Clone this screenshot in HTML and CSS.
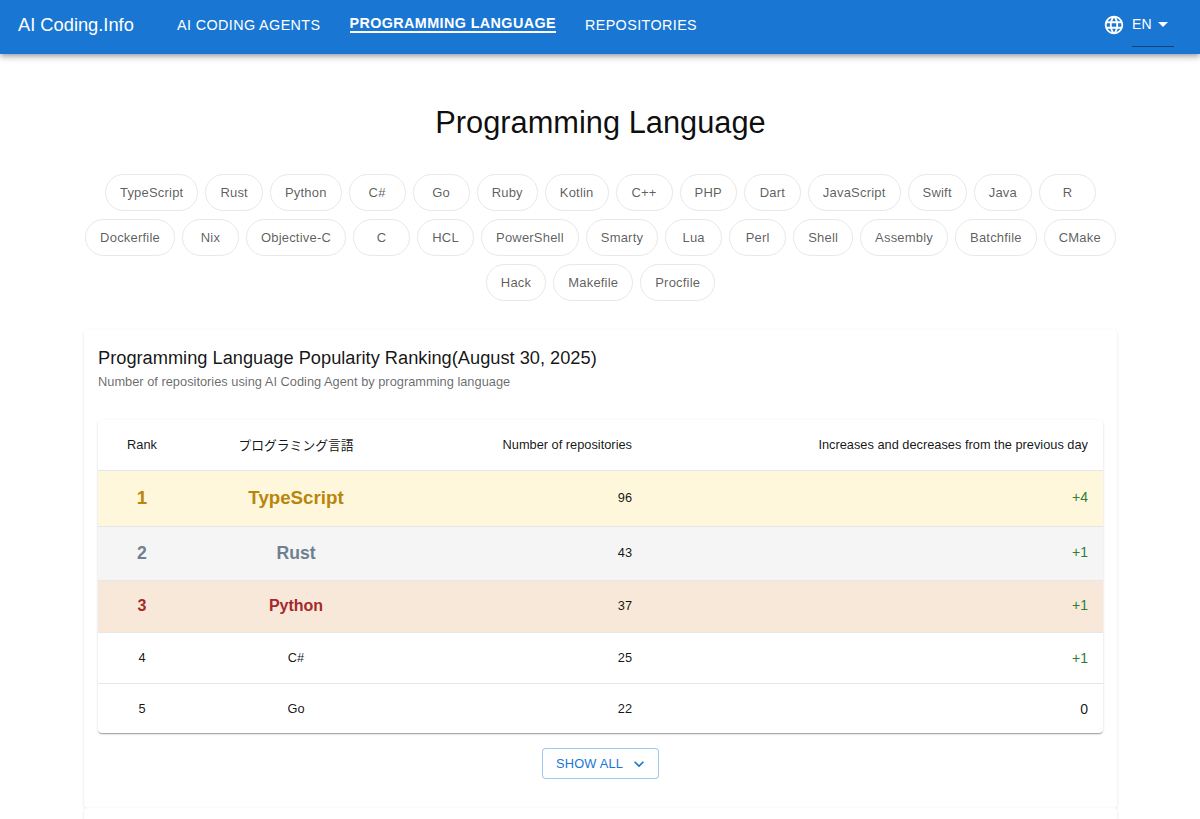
FILE: index.html
```html
<!DOCTYPE html>
<html lang="en">
<head>
<meta charset="utf-8">
<title>Programming Language</title>
<link rel="stylesheet" href="styles.css">
</head>
<body>
<header class="appbar">
  <a class="brand" href="#">AI Coding.Info</a>
  <nav class="nav">
    <a href="#">AI Coding Agents</a>
    <a href="#" class="active">Programming Language</a>
    <a href="#">Repositories</a>
  </nav>
  <div class="lang">
    <svg class="globe" viewBox="0 0 24 24" width="22" height="22"><path fill="#fff" d="M11.99 2C6.47 2 2 6.48 2 12s4.47 10 9.99 10C17.52 22 22 17.52 22 12S17.52 2 11.99 2zm6.93 6h-2.95c-.32-1.25-.78-2.45-1.38-3.56 1.84.63 3.37 1.91 4.33 3.56zM12 4.04c.83 1.2 1.48 2.53 1.91 3.96h-3.82c.43-1.43 1.08-2.76 1.91-3.96zM4.26 14C4.1 13.36 4 12.69 4 12s.1-1.36.26-2h3.38c-.08.66-.14 1.32-.14 2s.06 1.34.14 2H4.26zm.82 2h2.95c.32 1.25.78 2.45 1.38 3.56-1.84-.63-3.37-1.9-4.33-3.56zm2.95-8H5.08c.96-1.66 2.49-2.93 4.33-3.56C8.81 5.55 8.35 6.75 8.03 8zM12 19.96c-.83-1.2-1.48-2.53-1.91-3.96h3.82c-.43 1.43-1.08 2.76-1.91 3.96zM14.34 14H9.66c-.09-.66-.16-1.32-.16-2s.07-1.35.16-2h4.68c.09.65.16 1.32.16 2s-.07 1.34-.16 2zm.25 5.56c.6-1.11 1.06-2.31 1.38-3.56h2.95c-.96 1.65-2.49 2.93-4.33 3.56zM16.36 14c.08-.66.14-1.32.14-2s-.06-1.34-.14-2h3.38c.16.64.26 1.31.26 2s-.1 1.36-.26 2h-3.38z"/></svg>
    <div class="select">
      <span>EN</span>
      <svg class="caret" viewBox="0 0 10 5" width="10" height="5"><path fill="#fff" d="M0 0l5 5 5-5z"/></svg>
    </div>
  </div>
</header>

<main class="page">
  <h1 class="title">Programming Language</h1>
  <div class="chips">
    <a class="chip" href="#">TypeScript</a><a class="chip" href="#">Rust</a><a class="chip" href="#">Python</a><a class="chip" href="#">C#</a><a class="chip" href="#">Go</a><a class="chip" href="#">Ruby</a><a class="chip" href="#">Kotlin</a><a class="chip" href="#">C++</a><a class="chip" href="#">PHP</a><a class="chip" href="#">Dart</a><a class="chip" href="#">JavaScript</a><a class="chip" href="#">Swift</a><a class="chip" href="#">Java</a><a class="chip" href="#">R</a><a class="chip" href="#">Dockerfile</a><a class="chip" href="#">Nix</a><a class="chip" href="#">Objective-C</a><a class="chip" href="#">C</a><a class="chip" href="#">HCL</a><a class="chip" href="#">PowerShell</a><a class="chip" href="#">Smarty</a><a class="chip" href="#">Lua</a><a class="chip" href="#">Perl</a><a class="chip" href="#">Shell</a><a class="chip" href="#">Assembly</a><a class="chip" href="#">Batchfile</a><a class="chip" href="#">CMake</a><a class="chip" href="#">Hack</a><a class="chip" href="#">Makefile</a><a class="chip" href="#">Procfile</a>
  </div>

  <section class="card">
    <h2 class="card-title">Programming Language Popularity Ranking(August 30, 2025)</h2>
    <p class="card-sub">Number of repositories using AI Coding Agent by programming language</p>
    <div class="table-wrap">
      <table class="rank-table">
        <colgroup><col class="c-rank"><col class="c-lang"><col class="c-num"><col class="c-delta"></colgroup>
        <thead>
          <tr><th class="center">Rank</th><th class="center">プログラミング言語</th><th class="right">Number of repositories</th><th class="right">Increases and decreases from the previous day</th></tr>
        </thead>
        <tbody>
          <tr class="gold"><td class="center medal">1</td><td class="center medal">TypeScript</td><td class="right">96</td><td class="right up">+4</td></tr>
          <tr class="silver"><td class="center medal">2</td><td class="center medal">Rust</td><td class="right">43</td><td class="right up">+1</td></tr>
          <tr class="bronze"><td class="center medal">3</td><td class="center medal">Python</td><td class="right">37</td><td class="right up">+1</td></tr>
          <tr class="plain"><td class="center">4</td><td class="center">C#</td><td class="right">25</td><td class="right up">+1</td></tr>
          <tr class="plain last"><td class="center">5</td><td class="center">Go</td><td class="right">22</td><td class="right zero">0</td></tr>
        </tbody>
      </table>
    </div>
    <div class="more">
      <button class="more-btn" type="button">Show All
        <svg viewBox="0 0 24 24" width="20" height="20"><path fill="#1976d2" d="M7.41 8.59 12 13.17l4.59-4.58L18 10l-6 6-6-6z"/></svg>
      </button>
    </div>
  </section>
  <section class="card next"></section>
</main>
</body>
</html>
```
FILE: styles.css
```css
* { box-sizing: border-box; }
html, body { margin: 0; padding: 0; height: 100%; overflow: hidden; }
body { background: #fff; color: rgba(0,0,0,.87); font-family: "Liberation Sans", Arial, "Noto Sans CJK JP", sans-serif; }
a { color: inherit; text-decoration: none; }

.appbar {
  height: 54px; background: #1976d2; color: #fff; display: flex; align-items: center; padding: 0 26px 6px 18px;
  box-shadow: 0 2px 4px -1px rgba(0,0,0,.2), 0 4px 5px 0 rgba(0,0,0,.14), 0 1px 10px 0 rgba(0,0,0,.12);
  position: relative;
}
.brand { font-size: 18.3px; width: 159px; margin-top: 2px; }
.nav { display: flex; align-items: flex-start; gap: 29px; flex: 1; }
.nav a { font-size: 14.35px; text-transform: uppercase; letter-spacing: .4px; line-height: 18px; padding-top: 1px; }
.nav a.active { font-weight: 700; line-height: 15px; border-bottom: 2px solid #fff; }
.lang { display: flex; align-items: center; gap: 7px; }
.globe { display: block; margin-top: 2px; }
.select { width: 42px; height: 46px; display: flex; align-items: center; gap: 6px; font-size: 14px; letter-spacing: .2px; border-bottom: 1px solid rgba(0,0,0,.42); }
.caret { margin-top: 1px; }

.page { padding: 0 83px 0 84px; }
.title { margin: 50px 0 0; font-weight: 400; font-size: 30.8px; line-height: 37px; text-align: center; color: rgba(0,0,0,.95); }
.chips { display: flex; flex-wrap: wrap; justify-content: center; gap: 8px 7px; margin-top: 33px; }
.chip { height: 37px; min-width: 57px; padding: 0 14px; border: 1px solid #e8e8e8; border-radius: 19px; font-size: 13px; letter-spacing: .2px; color: rgba(0,0,0,.65); display: flex; align-items: center; justify-content: center; }

.card { margin-top: 29px; height: 478px; background: #fff; border-radius: 4px; padding: 14px; box-shadow: 0 1px 3px rgba(0,0,0,.12); }
.card-title { margin: 5px 0 0; font-weight: 400; font-size: 18.24px; line-height: 18px; color: rgba(0,0,0,.92); }
.card-sub { margin: 7px 0 0; font-size: 12.83px; line-height: 16px; color: rgba(0,0,0,.6); }
.table-wrap { margin-top: 30px; border-radius: 4px; box-shadow: 0 2px 1px -1px rgba(0,0,0,.2), 0 1px 1px 0 rgba(0,0,0,.14), 0 1px 3px 0 rgba(0,0,0,.12); overflow: hidden; }
.rank-table { width: 100%; table-layout: fixed; border-collapse: collapse; font-size: 12.8px; }
.c-rank { width: 88px; } .c-lang { width: 220px; } .c-num { width: 241px; }
.rank-table th { height: 50px; font-weight: 400; padding: 0 15px 1px; border-bottom: 1px solid #e6e6e6; color: rgba(0,0,0,.92); }
.rank-table td { padding: 0 15px; border-bottom: 1px solid #e6e6e6; color: rgba(0,0,0,.92); }
.center { text-align: center; }
.right { text-align: right; }
.medal { font-weight: 700; }
.rank-table .up { color: #2e7d32; font-size: 14px; }
.zero { font-size: 14px; }
.gold { height: 56px; background: #fff7dc; }
.rank-table .gold .medal { font-size: 18.72px; color: #b8860b; }
.silver { height: 54px; background: #f5f5f5; }
.rank-table .silver .medal { font-size: 17.6px; color: #708090; }
.bronze { height: 52px; background: #f7e8da; }
.rank-table .bronze .medal { font-size: 16px; color: #a52a2a; }
.rank-table .gold .right, .rank-table .silver .right, .rank-table .bronze .right { padding-bottom: 2px; }
.plain { height: 51px; }
.plain.last { height: 50px; }
.rank-table .plain.last td { border-bottom: 0; padding-top: 1px; }
.more { display: flex; justify-content: center; margin-top: 15px; }
.more-btn { height: 31px; width: 117px; padding: 0 0 0 13px; display: flex; align-items: center; gap: 6px; background: #fff; border: 1px solid rgba(25,118,210,.4); border-radius: 4px; color: #1976d2; font-family: inherit; font-size: 12.8px; text-transform: uppercase; letter-spacing: .2px; }
.card.next { margin-top: 0; height: 200px; }
```
